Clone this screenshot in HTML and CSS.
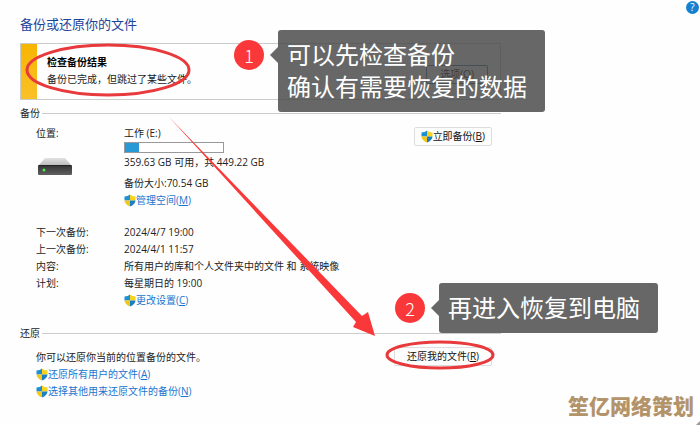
FILE: index.html
```
<!DOCTYPE html>
<html lang="zh-CN">
<head>
<meta charset="UTF-8">
<meta name="viewport" content="width=device-width, initial-scale=1.0">
  <title>备份或还原你的文件</title>
  <link rel="stylesheet" href="styles.css">
</head>
<body>

<svg class="defs" width="0" height="0" aria-hidden="true">
  <symbol id="shield" viewBox="0 0 12 13">
    <path d="M6 0.5 L6 6.5 L0.5 6.5 L0.5 2.5 Q4 2.3 6 0.5Z" fill="#1e8fd5"/>
    <path d="M6 0.5 L6 6.5 L11.5 6.5 L11.5 2.5 Q8 2.3 6 0.5Z" fill="#f8d31c"/>
    <path d="M0.5 6.5 L6 6.5 L6 12.5 Q1 10.5 0.5 6.5Z" fill="#f3c81a"/>
    <path d="M11.5 6.5 L6 6.5 L6 12.5 Q11 10.5 11.5 6.5Z" fill="#1c7fc0"/>
  </symbol>
</svg>

<main class="content">
  <h1>备份或还原你的文件</h1>

  <div class="notice">
    <div class="notice-text">
      <strong>检查备份结果</strong>
      <p>备份已完成，但跳过了某些文件。</p>
    </div>
    <button class="btn btn-options">选项(<u>O</u>)</button>
  </div>

  <h2><span>备份</span></h2>
  <section class="backup">
    <div class="details">
      <div class="label">
        位置:
        <svg class="drive" viewBox="0 0 34 18" aria-hidden="true">
          <defs>
            <linearGradient id="top" x1="0" y1="0" x2="0" y2="1">
              <stop offset="0" stop-color="#e2e2e2"/>
              <stop offset="1" stop-color="#bdbdbd"/>
            </linearGradient>
            <linearGradient id="front" x1="0" y1="0" x2="0" y2="1">
              <stop offset="0" stop-color="#333"/>
              <stop offset="1" stop-color="#606060"/>
            </linearGradient>
          </defs>
          <path d="M7 0H27L33 7H1Z" fill="url(#top)"/>
          <rect x="0" y="7" width="34" height="10" rx="1" fill="url(#front)"/>
          <path d="M1 7.500H33" stroke="#222"/>
          <circle cx="6" cy="12" r="1.500" fill="#4dea50"/>
        </svg>
      </div>
      <div class="location">
        <div>工作 (E:)</div>
        <div class="space"><div class="space-used"></div></div>
        <div>359.63 GB 可用，共 449.22 GB</div>
        <div class="size">备份大小:70.54 GB</div>
        <a href="#"><svg class="shield"><use href="#shield"/></svg>管理空间(<u>M</u>)</a>
      </div>
      <div class="label">下一次备份:</div>
      <div>2024/4/7 19:00</div>
      <div class="label">上一次备份:</div>
      <div>2024/4/1 11:57</div>
      <div class="label">内容:</div>
      <div>所有用户的库和个人文件夹中的文件 和 系统映像</div>
      <div class="label">计划:</div>
      <div>
        每星期日的 19:00
        <a href="#"><svg class="shield"><use href="#shield"/></svg>更改设置(<u>C</u>)</a>
      </div>
    </div>
    <button class="btn"><svg class="shield"><use href="#shield"/></svg>立即备份(<u>B</u>)</button>
  </section>

  <h2><span>还原</span></h2>
  <section class="restore">
    <div class="restore-links">
      <p>你可以还原你当前的位置备份的文件。</p>
      <a href="#"><svg class="shield"><use href="#shield"/></svg>还原所有用户的文件(<u>A</u>)</a>
      <a href="#"><svg class="shield"><use href="#shield"/></svg>选择其他用来还原文件的备份(<u>N</u>)</a>
    </div>
    <button class="btn btn-restore">还原我的文件(<u>R</u>)</button>
  </section>
</main>

<button class="help" aria-label="帮助">?</button>

<!-- marks drawn over the window -->
<svg class="marks" width="700" height="425" aria-hidden="true">
  <ellipse cx="108" cy="70" rx="81" ry="25"/>
  <ellipse cx="440" cy="355" rx="53" ry="13"/>
  <path d="M169 117L362 316L368 312L375 336L353 327L356 322Z"/>
  <path class="grip" d="M700 421V425H696Z"/>
</svg>

<div class="step step-one">
  <span class="number">1</span>
  <p class="bubble">可以先检查备份<br>确认有需要恢复的数据</p>
</div>
<div class="step step-two">
  <span class="number">2</span>
  <p class="bubble">再进入恢复到电脑</p>
</div>

<div class="watermark">笙亿网络策划</div>

</body>
</html>
```
FILE: styles.css
```
* {
  box-sizing: border-box;
}
body {
  position: relative;
  margin: 0;
  min-height: 100vh;
  background-color: #fefefe;
  color: #222;
  font-family: "Open Sans", "Noto Sans CJK SC", sans-serif;
  font-size: 10px;
  line-height: 17px;
}
h1, h2, p {
  margin: 0;
  font-weight: normal;
}
a {
  display: flex;
  align-items: center;
  color: #1b74cf;
  text-decoration: none;
}
.defs {
  position: absolute;
}
.content {
  max-width: 501px;
  padding: 14px 0 0 20px;
}
h1 {
  margin-bottom: 9px;
  color: #1c449c;
  font-size: 13px;
  line-height: 20px;
}
h2 {
  display: flex;
  align-items: center;
  gap: 2px;
  font-size: 10px;
}
h2::after {
  content: "";
  flex: 1;
  border-top: 1px solid #ccc;
}
.notice {
  display: flex;
  justify-content: space-between;
  align-items: flex-end;
  margin-bottom: 5px;
  padding: 10px 12px 11px 0;
  border: 1px solid #c8cdca;
  background: linear-gradient(#f7b500, #fbc02a) no-repeat left / 16px 100%;
}
.notice-text {
  padding-left: 26px;
}
.notice strong {
  color: #000;
}
.btn {
  display: flex;
  align-items: center;
  justify-content: center;
  height: 19px;
  padding: 0 6px;
  border: 1px solid #ddd;
  border-radius: 2px;
  background-color: #fdfdfd;
  color: #111;
  font: inherit;
  white-space: nowrap;
}
.btn-options {
  min-width: 62px;
  margin-bottom: 4px;
  border-color: #3a7d9c;
}
.btn-restore {
  min-width: 98px;
}
.shield {
  flex: none;
  width: 12px;
  height: 13px;
}
.backup {
  display: flex;
  justify-content: space-between;
  align-items: flex-start;
  padding: 3px 9px 0 16px;
  margin-bottom: 16px;
}
.backup .btn {
  margin-top: 2px;
}
.details {
  display: grid;
  grid-template-columns: 88px auto;
}
.drive {
  display: block;
  width: 34px;
  height: 18px;
  margin: 16px 0 0 2px;
}
.location {
  margin-bottom: 15px;
}
.space {
  width: 100px;
  height: 11px;
  margin-bottom: 1px;
  border: 1px solid #999;
  background-color: #fff;
}
.space-used {
  width: 14%;
  height: 100%;
  background-color: #2699d6;
}
.size {
  margin-top: 4px;
}
.restore {
  display: flex;
  justify-content: space-between;
  align-items: flex-start;
  padding: 5px 9px 0 16px;
}
.restore-links {
  padding-top: 2px;
}
.help {
  position: absolute;
  top: 1px;
  right: 1px;
  width: 13px;
  height: 13px;
  padding: 0;
  border: 0;
  border-radius: 50%;
  background-color: #1580d0;
  color: #fff;
  font: 10px/13px "Open Sans", sans-serif;
}
.marks {
  position: absolute;
  top: 0;
  left: 0;
}
.marks ellipse {
  fill: none;
  stroke: #e8393c;
  stroke-width: 3;
}
.marks path {
  fill: #fb3839;
}
.marks .grip {
  fill: #999;
}
.step {
  position: absolute;
  display: flex;
  align-items: center;
  gap: 14px;
}
.step-one {
  top: 30px;
  left: 234px;
  align-items: flex-start;
}
.step-one .number {
  margin-top: 10px;
}
.step-two {
  top: 283px;
  left: 395px;
}
.number {
  width: 30px;
  height: 30px;
  border-radius: 50%;
  background-color: #fb3839;
  color: #fff;
  font-family: "Noto Sans CJK SC", sans-serif;
  font-size: 18px;
  font-weight: 300;
  line-height: 30px;
  text-align: center;
}
.bubble {
  position: relative;
  padding: 9px 18px 9px 9px;
  border-radius: 3px;
  background-color: rgba(70, 70, 70, 0.82);
  color: #fff;
  font-size: 24px;
  line-height: 32px;
}
/* pointer towards the number */
.bubble::before {
  content: "";
  position: absolute;
  top: 17px;
  right: 100%;
  border: 8px solid transparent;
  border-left-width: 0;
  border-right-color: rgba(70, 70, 70, 0.82);
}
.watermark {
  position: absolute;
  right: 6px;
  bottom: 4px;
  color: #b3946a;
  font-size: 21px;
  font-weight: 900;
  line-height: 30px;
}
```
